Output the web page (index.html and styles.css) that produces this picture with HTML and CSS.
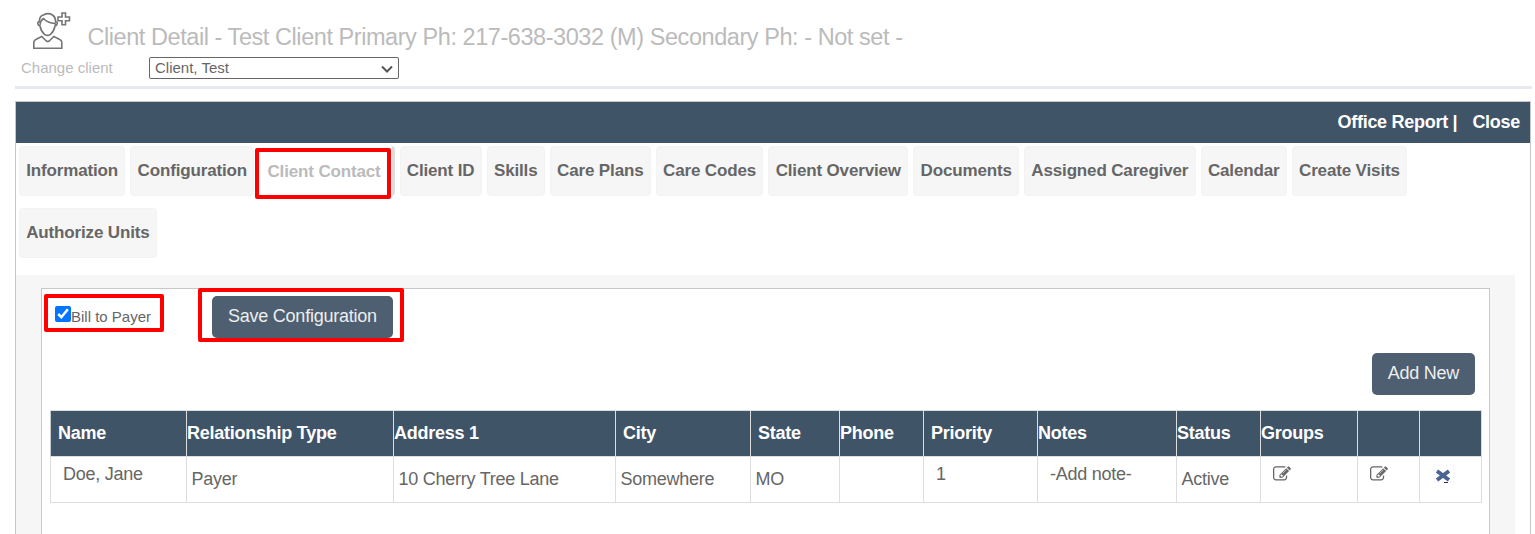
FILE: index.html
```html
<!DOCTYPE html>
<html lang="en">

<head>
    <meta charset="UTF-8">
    <meta name="viewport" content="width=device-width, initial-scale=1.0">
    <title>Client Detail</title>
    <link rel="stylesheet" href="styles.css">
</head>

<body>
    <svg class="sprite" width="0" height="0">
        <symbol id="edit" viewBox="0 0 1792 1792">
            <path d="M888 1184l116-116-152-152-116 116v56h96v96h56zm440-720q-16-16-33 1l-350 350q-17 17-1 33t33-1l350-350q17-17 1-33zm80 594v190q0 119-84.500 203.500t-203.500 84.500h-832q-119 0-203.500-84.500t-84.500-203.500v-832q0-119 84.500-203.500t203.500-84.500h832q63 0 117 25 15 7 18 23 3 17-9 29l-49 49q-14 14-32 8-23-6-45-6h-832q-66 0-113 47t-47 113v832q0 66 47 113t113 47h832q66 0 113-47t47-113v-126q0-13 9-22l64-64q15-15 35-7t20 29zm-96-738l288 288-672 672h-288v-288zm444 132l-92 92-288-288 92-92q28-28 68-28t68 28l152 152q28 28 28 68t-28 68z" />
        </symbol>
    </svg>

    <div class="header">
        <div class="title-row">
            <svg class="client-icon" width="38" height="38" viewBox="0 0 38 38">
                <path d="M.8 36.200v-6q0-2 2.500-3l5.500-2.700 4.500 4.500q1.500 1 3 0l4.500-4.500 5.500 2.700q2.500 1 2.500 3v6z" />
                <path d="M6.500 10q-2-.500-1.700 1.700.300 2 2.200 2.300 1 5.500 4.500 8.300 3 2.200 6 0 3.500-2.800 4.500-8.300 1.900-.300 2.200-2.300.300-2.200-1.700-1.700.500-4.500-3-7-4.500-2.700-9 0-4.500 1-4 7z" />
                <path d="M7 13q.500-4.500 3.500-6.500 4 4.500 11.500 5l.500 1.500" />
                <path d="M29 1h3.500v4h4v3.800h-4v4h-3.500v-4h-4v-3.800h4z" />
            </svg>
            <h1>Client Detail - Test Client Primary Ph: 217-638-3032 (M) Secondary Ph: - Not set -</h1>
        </div>
        <div class="change-row">
            <label for="client">Change client</label>
            <div class="select-box">
                <select id="client">
                    <option>Client, Test</option>
                </select>
                <svg class="arrow" width="12" height="8" viewBox="0 0 12 8">
                    <path d="M1 1.500l5 5 5-5" />
                </svg>
            </div>
        </div>
    </div>

    <div class="panel">
        <div class="panel-bar">
            <a>Office Report |</a>
            <a>Close</a>
        </div>

        <ul class="tabs">
            <li>Information</li>
            <li>Configuration</li>
            <li class="active">Client Contact<span class="mark mark-tab"></span></li>
            <li>Client ID</li>
            <li>Skills</li>
            <li>Care Plans</li>
            <li>Care Codes</li>
            <li>Client Overview</li>
            <li>Documents</li>
            <li>Assigned Caregiver</li>
            <li>Calendar</li>
            <li>Create Visits</li>
            <li>Authorize Units</li>
        </ul>

        <div class="content">
            <div class="box">
                <div class="config">
                    <label class="bill"><input type="checkbox" checked>Bill to Payer<span class="mark mark-bill"></span></label>
                    <div class="save">
                        <button class="btn">Save Configuration</button>
                        <span class="mark mark-save"></span>
                    </div>
                </div>
                <div class="add">
                    <button class="btn">Add New</button>
                </div>

                <table class="contacts">
                    <colgroup>
                        <col class="c-name">
                        <col class="c-type">
                        <col class="c-address">
                        <col class="c-city">
                        <col class="c-state">
                        <col class="c-phone">
                        <col class="c-priority">
                        <col class="c-notes">
                        <col class="c-status">
                        <col class="c-groups">
                        <col class="c-edit">
                        <col class="c-delete">
                    </colgroup>
                    <tr>
                        <th class="pad">Name</th>
                        <th>Relationship Type</th>
                        <th>Address 1</th>
                        <th class="pad">City</th>
                        <th class="pad">State</th>
                        <th>Phone</th>
                        <th class="pad">Priority</th>
                        <th>Notes</th>
                        <th>Status</th>
                        <th>Groups</th>
                        <th></th>
                        <th></th>
                    </tr>
                    <tr>
                        <td class="link">Doe, Jane</td>
                        <td>Payer</td>
                        <td>10 Cherry Tree Lane</td>
                        <td>Somewhere</td>
                        <td>MO</td>
                        <td></td>
                        <td class="link">1</td>
                        <td class="link">-Add note-</td>
                        <td>Active</td>
                        <td class="link icon"><svg class="edit"><use href="#edit" /></svg></td>
                        <td class="link icon"><svg class="edit"><use href="#edit" /></svg></td>
                        <td class="link delete">
                            <svg width="24" height="20" viewBox="0 0 24 20">
                                <path class="dots" d="M2 1h20v17h-20z" />
                                <path class="cross" d="M5 7l12 9M17 7l-12 9" />
                                <path class="shade" d="M12 18.500h4" />
                            </svg>
                        </td>
                    </tr>
                </table>
            </div>
        </div>
    </div>
</body>

</html>
```
FILE: styles.css
```css
* {
    box-sizing: border-box;
}

body {
    font-family: Arial, "Liberation Sans", sans-serif;
    background-color: #fff;
    color: #666;
    margin: 0;
    height: 534px;
    overflow: hidden;
}

.sprite {
    display: none;
}

.header {
    height: 89px;
    margin: 0 3px 12px 15px;
    padding-top: 12px;
    border-bottom: 3px solid #e6e9ef;
}

.title-row {
    display: flex;
    height: 45px;
    padding-left: 18px;
}

.client-icon {
    fill: none;
    stroke: #757575;
    stroke-width: 1.6;
}

.title-row h1 {
    margin: 11px 0 0 16.5px;
    font-size: 23.5px;
    font-weight: normal;
    line-height: 28px;
    letter-spacing: -0.44px;
    white-space: nowrap;
    color: #bbb;
}

.change-row {
    display: flex;
}

.change-row label {
    width: 134px;
    padding-left: 6px;
    font-size: 15px;
    line-height: 22px;
    color: #bbb;
}

.select-box {
    position: relative;
    width: 250px;
    height: 22px;
}

.select-box select {
    appearance: none;
    width: 100%;
    height: 100%;
    padding: 0 5px 2px;
    border: 1px solid #666;
    border-radius: 2px;
    background-color: #fff;
    color: #666;
    font-family: inherit;
    font-size: 15px;
}

.arrow {
    position: absolute;
    right: 6px;
    top: 8px;
    fill: none;
    stroke: #555;
    stroke-width: 2;
}

.panel {
    height: 440px;
    margin: 0 4px 0 15px;
    border: 1px solid #c8c8c8;
}

.panel-bar {
    display: flex;
    justify-content: flex-end;
    gap: 15px;
    height: 41px;
    padding-right: 10px;
    background-color: #405467;
    color: #fff;
    font-size: 18px;
    font-weight: bold;
    line-height: 40px;
    letter-spacing: -0.28px;
}

.tabs {
    display: flex;
    flex-wrap: wrap;
    gap: 12px 5px;
    list-style: none;
    margin: 0;
    padding: 3px 100px 17px 3px;
}

.tabs li {
    height: 50px;
    padding: 0 6.4px 0 6.2px;
    border: 1px solid #f3f3f3;
    border-radius: 4px;
    background-color: #f6f6f6;
    font-size: 17px;
    font-weight: bold;
    line-height: 47px;
    letter-spacing: -0.15px;
    white-space: nowrap;
}

.tabs li.active {
    position: relative;
    border-color: #ddd;
    border-width: 0 3px 0 0;
    padding: 0 11px 0 8px;
    background-color: #fff;
    color: #bbb;
    line-height: 51px;
}

/* red highlight frames */
.mark {
    position: absolute;
    border: 4px solid #f00;
    border-radius: 2px;
}

.mark-tab {
    left: -4px;
    top: 2px;
    width: 136px;
    height: 51px;
}

.content {
    height: 260px;
    margin-right: 15px;
    padding: 13px 25px 0;
    background-color: #f6f6f6;
}

.box {
    height: 260px;
    padding: 7px 7px 0 8px;
    border: 1px solid #c8c8c8;
    background-color: #fff;
}

.config {
    display: flex;
    height: 57px;
}

.bill {
    position: relative;
    display: flex;
    width: 162px;
    padding: 10px 0 0 5px;
    font-size: 15px;
    line-height: 22px;
}

.bill input {
    width: 16px;
    height: 16px;
    margin: 0;
    accent-color: #0075ff;
}

.mark-bill {
    left: -6px;
    top: -2px;
    width: 120px;
    height: 38px;
}

.save {
    position: relative;
}

.mark-save {
    left: -14px;
    top: -8px;
    width: 206px;
    height: 54px;
}

.btn {
    height: 42px;
    padding: 0 16px 2px;
    border: none;
    border-radius: 5px;
    background-color: #4d5f70;
    color: #eee;
    font-family: inherit;
    font-size: 18px;
    letter-spacing: -0.24px;
    white-space: nowrap;
}

.add {
    display: flex;
    justify-content: flex-end;
    height: 57px;
    padding-right: 7px;
}

.contacts {
    table-layout: fixed;
    width: 1432px;
    border-collapse: collapse;
    font-size: 18px;
    letter-spacing: -0.25px;
}

.contacts th {
    height: 46px;
    padding: 0;
    border: 1px solid #ddd;
    border-left-color: #c5cad0;
    background-color: #405467;
    color: #fff;
    text-align: left;
}

.contacts th.pad {
    padding-left: 7px;
}

.contacts td {
    height: 46px;
    padding: 0 0 0 4.5px;
    border: 1px solid #ddd;
}

.contacts td.link {
    padding: 7px 0 0 12px;
    vertical-align: top;
}

.c-name { width: 136px; }
.c-type { width: 207px; }
.c-address { width: 222px; }
.c-city { width: 135px; }
.c-state { width: 89px; }
.c-phone { width: 84px; }
.c-priority { width: 114px; }
.c-notes { width: 139px; }
.c-status { width: 84px; }
.c-groups { width: 97px; }
.c-edit { width: 62px; }
.c-delete { width: 62px; }

.edit {
    display: block;
    width: 18px;
    height: 20px;
    fill: #666;
}

.delete svg {
    display: block;
    fill: none;
}

.dots {
    stroke: #e6e6ec;
    stroke-dasharray: 1 3;
}

.cross {
    stroke: #4a6590;
    stroke-width: 4;
}

.shade {
    stroke: #334;
}
```
